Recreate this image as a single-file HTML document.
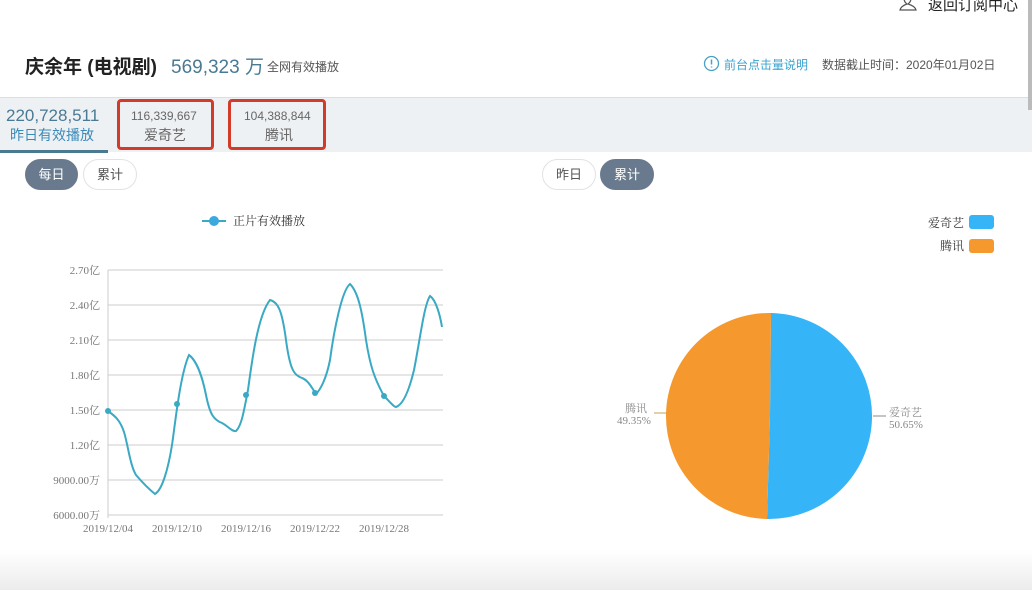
<!DOCTYPE html>
<html><head><meta charset="utf-8"><style>
*{margin:0;padding:0;box-sizing:border-box}
body{width:1032px;height:590px;overflow:hidden;background:#fff;font-family:"Liberation Sans","Noto Sans CJK SC",sans-serif;position:relative}
.a{position:absolute;white-space:nowrap}
.btn{position:absolute;height:31px;border-radius:16px;font-size:13px;line-height:29px;text-align:center;border:1px solid #e2e2e2;color:#555;background:#fff}
.btn.on{background:#6a7a8e;color:#fff;border-color:#6a7a8e}
.red{position:absolute;border:3px solid #d23a2a;border-radius:4px}
</style></head><body>
<div class="a" style="left:928px;top:-6px;font-size:15px;color:#222">返回订阅中心</div>
<svg class="a" style="left:898px;top:-4px" width="20" height="16"><path d="M6 2 Q10 -2 13 2 Q13 6 10 8 Q17 10 18 14 H2 Q3 10 9 8 Q6 6 6 2Z" fill="none" stroke="#555" stroke-width="1.2"/></svg>
<div class="a" style="left:25px;top:52px;font-size:19px;color:#222;font-weight:bold">庆余年 (电视剧)</div>
<div class="a" style="left:171px;top:52px;font-size:19px;color:#4a7a93">569,323 万</div>
<div class="a" style="left:267px;top:58px;font-size:12px;color:#555">全网有效播放</div>
<svg class="a" style="left:703px;top:55px" width="17" height="17"><circle cx="8.5" cy="8.5" r="7" fill="none" stroke="#4aa0c0" stroke-width="1.3"/><path d="M8.5 4.5V9.5M8.5 11.5V12.5" stroke="#4aa0c0" stroke-width="1.5"/></svg>
<div class="a" style="left:724px;top:56px;font-size:12px;color:#3aa3d0">前台点击量说明</div>
<div class="a" style="left:822px;top:56px;font-size:12px;color:#555">数据截止时间：2020年01月02日</div>
<div class="a" style="left:0;top:97px;width:1032px;height:55px;background:#eef1f4;border-top:1px solid #dcdfe2"></div>
<div class="a" style="left:0;top:150px;width:108px;height:3px;background:#4a7a90"></div>
<div class="a" style="left:6px;top:106px;font-size:17px;color:#4a7a93">220,728,511</div>
<div class="a" style="left:10px;top:125px;font-size:14px;color:#3a8ab8">昨日有效播放</div>
<div class="red" style="left:117px;top:99px;width:97px;height:51px"></div>
<div class="a" style="left:131px;top:109px;font-size:12px;color:#666">116,339,667</div>
<div class="a" style="left:144px;top:125px;font-size:14px;color:#666">爱奇艺</div>
<div class="red" style="left:228px;top:99px;width:98px;height:51px"></div>
<div class="a" style="left:244px;top:109px;font-size:12px;color:#666">104,388,844</div>
<div class="a" style="left:265px;top:125px;font-size:14px;color:#666">腾讯</div>
<div class="btn on" style="left:25px;top:159px;width:53px">每日</div>
<div class="btn" style="left:83px;top:159px;width:54px">累计</div>
<div class="btn" style="left:542px;top:159px;width:54px">昨日</div>
<div class="btn on" style="left:600px;top:159px;width:54px">累计</div>
<svg class="a" style="left:0;top:0" width="1032" height="590">
<g stroke="#ccc" stroke-width="1">
<line x1="108" y1="270" x2="443" y2="270"/><line x1="108" y1="305" x2="443" y2="305"/><line x1="108" y1="340" x2="443" y2="340"/><line x1="108" y1="375" x2="443" y2="375"/><line x1="108" y1="410" x2="443" y2="410"/><line x1="108" y1="445" x2="443" y2="445"/><line x1="108" y1="480" x2="443" y2="480"/><line x1="108" y1="515" x2="443" y2="515"/><line x1="108" y1="270" x2="108" y2="518"/>
</g>
<g fill="#777" font-size="11" font-family="Liberation Serif,Noto Serif CJK SC,serif" text-anchor="end">
<text x="100" y="274">2.70亿</text><text x="100" y="309">2.40亿</text><text x="100" y="344">2.10亿</text><text x="100" y="379">1.80亿</text><text x="100" y="414">1.50亿</text><text x="100" y="449">1.20亿</text><text x="100" y="484">9000.00万</text><text x="100" y="519">6000.00万</text>
</g>
<g fill="#777" font-size="11" font-family="Liberation Serif,serif" text-anchor="middle">
<text x="108" y="532">2019/12/04</text><text x="177" y="532">2019/12/10</text><text x="246" y="532">2019/12/16</text><text x="315" y="532">2019/12/22</text><text x="384" y="532">2019/12/28</text>
</g>
<path d="M108 411 C115 416 120 420 124 432 C128 445 130 465 136 475 C142 482 150 490 155 494 C162 490 168 470 172 445 C175 425 180 375 189 355 C196 360 202 375 206 395 C210 415 214 420 222 423 C228 426 232 432 236 431 C242 425 244 410 248 390 C252 360 258 315 270 300 C278 302 282 310 286 340 C290 370 294 375 302 378 C308 380 312 388 316 394 C320 390 326 380 330 360 C334 330 342 290 350 284 C358 292 362 310 366 340 C370 365 374 378 384 396 C390 402 394 407 396 407 C402 405 408 395 414 370 C420 340 424 305 430 296 C436 300 440 315 442 327" fill="none" stroke="#3aa9c4" stroke-width="2"/>
<g fill="#3aa9c4"><circle cx="108" cy="411" r="3"/><circle cx="177" cy="404" r="3"/><circle cx="246" cy="395" r="3"/><circle cx="315" cy="393" r="3"/><circle cx="384" cy="396" r="3"/></g>
<line x1="202" y1="221" x2="226" y2="221" stroke="#3aa9c4" stroke-width="2"/><circle cx="214" cy="221" r="5" fill="#3aa9dd"/>
<text x="233" y="225" font-size="12" fill="#333" font-family="Liberation Serif,Noto Serif CJK SC,serif">正片有效播放</text>
<path d="M770 416 L771 313 A103 103 0 1 1 767 519 Z" fill="#35b4f7"/>
<path d="M770 416 L767 519 A103 103 0 0 1 771 313 Z" fill="#f5992e"/>
<line x1="873" y1="416" x2="886" y2="416" stroke="#888"/><line x1="654" y1="413" x2="667" y2="413" stroke="#c9a050"/>
<g font-size="11" fill="#888" font-family="Liberation Serif,Noto Serif CJK SC,serif">
<text x="889" y="416">爱奇艺</text><text x="889" y="428">50.65%</text>
<text x="625" y="412">腾讯</text><text x="617" y="424">49.35%</text>
</g>
<g font-size="12" fill="#333" font-family="Liberation Serif,Noto Serif CJK SC,serif">
<text x="928" y="227">爱奇艺</text><text x="940" y="250">腾讯</text></g>
<rect x="969" y="215" width="25" height="14" rx="3" fill="#35b4f7"/>
<rect x="969" y="239" width="25" height="14" rx="3" fill="#f5992e"/>
<rect x="1028" y="0" width="4" height="110" fill="#bbb"/>
</svg>
<div class="a" style="left:0;top:550px;width:1032px;height:40px;background:linear-gradient(#fff,#ececec)"></div>
</body></html>
